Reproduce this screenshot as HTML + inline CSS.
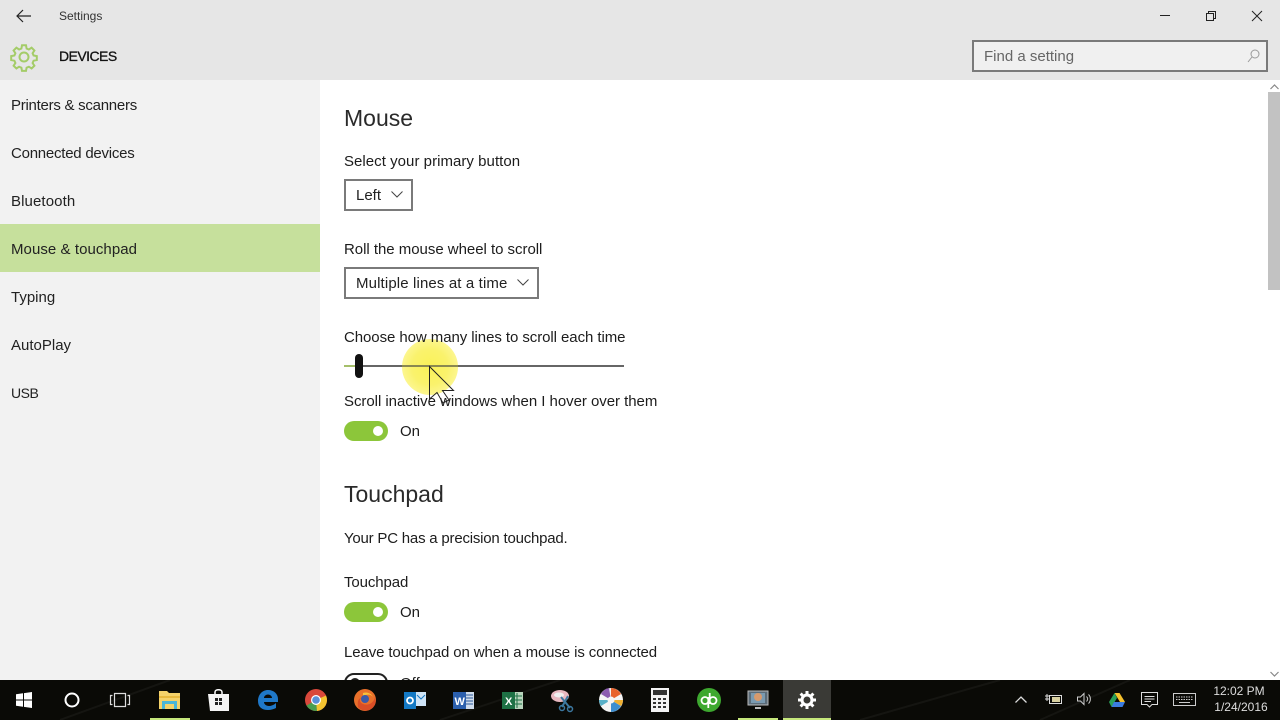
<!DOCTYPE html>
<html><head><meta charset="utf-8"><title>Settings</title>
<style>
html,body{margin:0;padding:0}
body{width:1280px;height:720px;position:relative;overflow:hidden;background:#fff;font-family:"Liberation Sans",sans-serif;color:#1a1a1a}
.a{position:absolute;white-space:nowrap}
.t{font-size:15px;line-height:20px;color:#1c1c1c}
.h{font-size:23px;line-height:30px;color:#2a2a2a}
.nav{position:absolute;left:0;width:320px;height:48px;line-height:50px;padding-top:1px;box-sizing:border-box;font-size:15px;color:#222;text-indent:11px}
.dd{position:absolute;box-sizing:border-box;height:32px;border:2px solid #7a7a7a;background:#fff;font-size:15px;line-height:30px;padding-left:10px;color:#222}
.tog{position:absolute;left:344px;width:44px;height:20px;border-radius:10px;background:#8cc63a}
.tog i{position:absolute;left:29px;top:5px;width:10px;height:10px;border-radius:5px;background:#fff}
svg{position:absolute;overflow:visible}
</style></head><body>
<div class="a" style="left:0;top:0;width:1280px;height:80px;background:#e6e6e6"></div>
<div class="a" style="left:0;top:80px;width:320px;height:600px;background:#f2f2f2"></div>

<svg style="left:16px;top:9px" width="16" height="14" fill="none" stroke="#222" stroke-width="1.2"><path d="M1 7H15M7 1L1 7L7 13"/></svg>
<div class="a" style="left:59px;top:6px;font-size:12px;line-height:20px;color:#333">Settings</div>
<svg style="left:11px;top:44px" width="26" height="26" viewBox="0 0 26 26" fill="none" stroke="#a4cc68" stroke-width="2"><path d="M11 1.5h4l.6 3.2 2.3 1 2.7-1.8 2.8 2.8-1.8 2.700 1 2.300 3.200.6v4l-3.200.6-1 2.300 1.800 2.700-2.800 2.800-2.700-1.800-2.300 1-.6 3.200h-4l-.6-3.200-2.300-1-2.700 1.800-2.800-2.800 1.800-2.700-1-2.300-3.200-.6v-4l3.200-.6 1-2.300-1.800-2.700 2.800-2.800 2.700 1.800 2.300-1z" transform="translate(0 -.2)"/><circle cx="13" cy="13" r="4.5"/></svg>
<div class="a" style="left:59px;top:46px;font-size:14px;letter-spacing:-.55px;line-height:20px;font-weight:400;color:#111;-webkit-text-stroke:.3px #111">DEVICES</div>

<svg style="left:1160px;top:15px" width="10" height="2"><path d="M0 .5H10" stroke="#222"/></svg>
<svg style="left:1206px;top:11px" width="10" height="10" fill="none" stroke="#222"><path d="M.5 2.500h7v7h-7zM2.500 2.500v-2h7v7h-2"/></svg>
<svg style="left:1252px;top:11px" width="10" height="10" fill="none" stroke="#222"><path d="M0 0L10 10M10 0L0 10"/></svg>

<div class="a" style="left:972px;top:40px;width:296px;height:32px;box-sizing:border-box;border:2px solid #7a7a7a;background:#f0f0f0"></div>
<div class="a" style="left:984px;top:47px;font-size:15px;line-height:20px;color:#666">Find a setting</div>
<svg style="left:1247px;top:49px" width="13" height="14" fill="none" stroke="#999"><circle cx="8" cy="5" r="4"/><path d="M5 8L1 13"/></svg>

<div class="nav" style="top:80px;letter-spacing:-.26px">Printers &amp; scanners</div>
<div class="nav" style="top:128px;letter-spacing:-.24px">Connected devices</div>
<div class="nav" style="top:176px;letter-spacing:.1px">Bluetooth</div>
<div class="nav" style="top:224px;background:#c6e09c;letter-spacing:.06px">Mouse &amp; touchpad</div>
<div class="nav" style="top:272px">Typing</div>
<div class="nav" style="top:320px">AutoPlay</div>
<div class="nav" style="top:367px;font-size:14px;letter-spacing:-.5px">USB</div>

<div class="a h" style="left:344px;top:103px">Mouse</div>
<div class="a t" style="left:344px;top:152px;letter-spacing:.04px">Select your primary button</div>
<div class="dd" style="left:344px;top:179px;width:69px">Left</div>
<svg style="left:391px;top:191px" width="12" height="7" fill="none" stroke="#444"><path d="M.5 .5L6 6L11.5 .5"/></svg>
<div class="a t" style="left:344px;top:240px;letter-spacing:-.03px">Roll the mouse wheel to scroll</div>
<div class="dd" style="left:344px;top:267px;width:195px;letter-spacing:.13px">Multiple lines at a time</div>
<svg style="left:517px;top:279px" width="12" height="7" fill="none" stroke="#444"><path d="M.5 .5L6 6L11.5 .5"/></svg>

<div class="a" style="left:402px;top:339px;width:56px;height:56px;border-radius:28px;background:radial-gradient(circle,#f9f158 0,#faf26c 45%,#fcf68e 70%,#fefbc8 88%,rgba(255,255,255,0) 100%)"></div>
<div class="a" style="left:344px;top:365px;width:280px;height:2px;background:#666"></div>
<div class="a" style="left:402px;top:365px;width:56px;height:2px;background:#8a8850"></div>
<div class="a" style="left:344px;top:365px;width:14px;height:2px;background:#a5bf6a"></div>
<div class="a" style="left:355px;top:354px;width:8px;height:24px;border-radius:4px;background:#111"></div>
<div class="a t" style="left:344px;top:328px;letter-spacing:-.07px">Choose how many lines to scroll each time</div>

<div class="a t" style="left:344px;top:392px;letter-spacing:-.04px">Scroll inactive windows when I hover over them</div>
<svg style="left:429px;top:366px" width="26" height="38" viewBox="0 0 26 38" fill="none" stroke="#222" stroke-width="1"><path d="M.5 .5V33L8 26.500L14 37L20 34L13.500 24.500H24.500Z"/></svg>
<div class="tog" style="top:421px"><i></i></div>
<div class="a t" style="left:400px;top:422px">On</div>

<div class="a h" style="left:344px;top:479px">Touchpad</div>
<div class="a t" style="left:344px;top:529px;letter-spacing:-.21px">Your PC has a precision touchpad.</div>
<div class="a t" style="left:344px;top:573px;letter-spacing:-.1px">Touchpad</div>
<div class="tog" style="top:602px"><i></i></div>
<div class="a t" style="left:400px;top:603px">On</div>
<div class="a t" style="left:344px;top:643px;letter-spacing:-.11px">Leave touchpad on when a mouse is connected</div>
<div class="a" style="left:344px;top:673px;width:44px;height:20px;box-sizing:border-box;border:2px solid #222;border-radius:10px"><span style="position:absolute;left:4px;top:3px;width:10px;height:10px;border-radius:5px;background:#222"></span></div>
<div class="a t" style="left:400px;top:674px">Off</div>

<div class="a" style="left:1268px;top:92px;width:12px;height:198px;background:#c2c2c2"></div>
<svg style="left:1270px;top:84px" width="9" height="6" fill="none" stroke="#888" stroke-width="1.2"><path d="M.5 5L4.500 1L8.500 5"/></svg>
<svg style="left:1270px;top:671px" width="9" height="6" fill="none" stroke="#888" stroke-width="1.2"><path d="M.5 1L4.500 5L8.500 1"/></svg>

<!-- taskbar -->
<div class="a" style="left:0;top:680px;width:1280px;height:40px;background:#0a0a06;overflow:hidden">
<svg style="left:0;top:0" width="1280" height="40" fill="none" stroke="#151511" stroke-width="2"><path d="M440 40L560 0M170 0L60 40M860 40L1000 0M1040 40L1130 0"/></svg>
<div class="a" style="left:783px;top:0;width:48px;height:40px;background:#3a3a36"></div>
<div class="a" style="left:150px;top:38px;width:40px;height:2px;background:#c6e87c"></div>
<div class="a" style="left:738px;top:38px;width:40px;height:2px;background:#c6e87c"></div>
<div class="a" style="left:783px;top:38px;width:48px;height:2px;background:#c6e87c"></div>

<svg style="left:16px;top:12px" width="16" height="16" fill="#fff"><path d="M0 2.300L7 1.300V7.500H0ZM8 1.100L16 0V7.500H8ZM0 8.500H7V14.700L0 13.700ZM8 8.500H16V16L8 14.900Z"/></svg>
<svg style="left:64px;top:12px" width="16" height="16" fill="none" stroke="#fff" stroke-width="2"><circle cx="8" cy="8" r="6.500"/></svg>
<svg style="left:110px;top:13px" width="20" height="14" fill="none" stroke="#ddd" stroke-width="1.200"><path d="M4.500 .5H15.500V13.500H4.500ZM2.500 2.500H.5V11.500H2.500M17.500 2.500H19.500V11.500H17.500"/></svg>

<svg style="left:159px;top:10px" width="22" height="20"><path d="M0 1H8L10 3H21V19H0Z" fill="#f4d26a"/><path d="M0 6H21V8H0Z" fill="#e8b93e"/><path d="M3 11H18V19H3Z" fill="#4ab6d8"/><path d="M6 14H15V19H6Z" fill="#f4d26a"/></svg>
<svg style="left:208px;top:8px" width="21" height="24"><path d="M7 7V4C7 1 14 1 14 4V7" fill="none" stroke="#fff" stroke-width="1.500"/><path d="M0 6H21V23H2Z" fill="#f4f4f4"/><path d="M7 10H10V13H7ZM11 10H14V13H11ZM7 14H10V17H7ZM11 14H14V17H11Z" fill="#222"/></svg>
<svg style="left:258px;top:9px" width="20" height="22" viewBox="0 0 20 22"><path d="M10 1C4 1 0 6 0 12C0 18 4 21 10 21C13 21 16 20 18 19V14C16 16 13 17 11 17C8 17 6 15 6 13H20V10C20 5 16 1 10 1ZM6 9C6 7 8 5.500 10 5.500C12 5.500 14 7 14 9Z" fill="#1f78c8"/></svg>
<svg style="left:305px;top:9px" width="22" height="22" viewBox="0 0 22 22"><circle cx="11" cy="11" r="11" fill="#d9483b"/><path d="M11 11L1.500 16.500A11 11 0 0 0 12 22Z" fill="#4a9e4f"/><path d="M11 11L21 6.500A11 11 0 0 1 12 22Z" fill="#f4c430"/><circle cx="11" cy="11" r="5" fill="#fff"/><circle cx="11" cy="11" r="3.800" fill="#5a90d8"/></svg>
<svg style="left:354px;top:9px" width="22" height="22" viewBox="0 0 22 22"><circle cx="11" cy="11" r="11" fill="#e8702a"/><path d="M4 18A10 10 0 0 0 21 8C20 14 14 17 9 15C6 14 5 11 7 9C5 9 3 12 4 18Z" fill="#d94e26"/><path d="M9 4A8 8 0 0 1 19 8C17 5 13 5 9 7Z" fill="#f6c13c"/><circle cx="11" cy="10" r="4" fill="#3c5aa8"/></svg>
<svg style="left:404px;top:9px" width="22" height="22"><rect x="9" y="3" width="13" height="14" fill="#cfe4f6"/><rect x="0" y="3" width="12" height="17" fill="#1479c4"/><circle cx="6" cy="11.500" r="3" fill="none" stroke="#fff" stroke-width="1.800"/><path d="M13 6L17 10L21 6" fill="none" stroke="#1479c4"/></svg>
<svg style="left:453px;top:10px" width="22" height="20"><rect x="9" y="2" width="12" height="17" fill="#cfdcec"/><path d="M11 5H20M11 8H20M11 11H20M11 14H20" stroke="#2b5797"/><rect x="0" y="2" width="13" height="17" fill="#2b5fad"/><text x="1.500" y="15" font-size="11" font-weight="bold" fill="#fff" font-family="Liberation Sans">W</text></svg>
<svg style="left:502px;top:10px" width="22" height="20"><rect x="9" y="2" width="12" height="17" fill="#b8d4bc"/><path d="M11 6H20M11 10H20M11 14H20M15 3V18" stroke="#1e7145"/><rect x="0" y="2" width="13" height="17" fill="#1e7145"/><text x="3" y="15" font-size="11" font-weight="bold" fill="#fff" font-family="Liberation Sans">X</text></svg>
<svg style="left:550px;top:8px" width="24" height="24"><ellipse cx="10" cy="8" rx="9" ry="6" fill="#e8b8c0"/><ellipse cx="9" cy="7" rx="5" ry="2.500" fill="#f0f0f0"/><path d="M11 9L20 20M18 8L12 19" stroke="#3c78a0" stroke-width="2"/><circle cx="12" cy="20" r="2.500" fill="none" stroke="#3c78a0" stroke-width="1.500"/><circle cx="20" cy="21" r="2.500" fill="none" stroke="#3c78a0" stroke-width="1.500"/></svg>
<svg style="left:599px;top:8px" width="24" height="24" viewBox="0 0 24 24"><circle cx="12" cy="12" r="12" fill="#f4f4f4"/><path d="M12 12L12 0A12 12 0 0 1 22 6Z" fill="#e8622c"/><path d="M12 12L22 18A12 12 0 0 1 12 24Z" fill="#3c8ed0"/><path d="M12 12L2 18A12 12 0 0 1 0 12Z" fill="#58b0c8"/><path d="M12 12L2 6A12 12 0 0 1 10 0Z" fill="#8c5cb0"/><path d="M12 12L24 12A12 12 0 0 1 22 18Z" fill="#f0b030"/><circle cx="12" cy="12" r="3.500" fill="#f4f4f4"/></svg>
<svg style="left:651px;top:8px" width="18" height="24"><rect width="18" height="24" fill="#f4f4f4"/><rect x="2" y="2" width="14" height="5" fill="#333"/><path d="M2 10h3v2H2zM7 10h3v2H7zM12 10h3v2h-3zM2 14h3v2H2zM7 14h3v2H7zM12 14h3v2h-3zM2 18h3v2H2zM7 18h3v2H7zM12 18h3v2h-3z" fill="#333"/></svg>
<svg style="left:697px;top:8px" width="24" height="24" fill="none"><circle cx="12" cy="12" r="12" fill="#3da82f"/><circle cx="8" cy="12.500" r="3.500" stroke="#fff" stroke-width="1.800"/><circle cx="16" cy="12.500" r="3.500" stroke="#fff" stroke-width="1.800"/><path d="M11.300 9V20M12.700 5V16" stroke="#fff" stroke-width="1.800"/></svg>
<svg style="left:747px;top:9px" width="22" height="22"><rect x="1" y="2" width="20" height="14" fill="#5c6c78" stroke="#bbb"/><rect x="4" y="4" width="14" height="10" fill="#7a9ab0"/><circle cx="11" cy="8" r="4" fill="#d89a6c"/><path d="M8 19H14" stroke="#bbb" stroke-width="2"/></svg>
<svg style="left:798px;top:11px" width="18" height="18" viewBox="0 0 18 18" fill="none" stroke="#fff"><circle cx="9" cy="9" r="5" stroke-width="3"/><path d="M9 0V4M9 14V18M0 9H4M14 9H18M2.600 2.600L5.500 5.500M12.500 12.500L15.400 15.400M15.400 2.600L12.500 5.500M5.500 12.500L2.600 15.400" stroke-width="3"/></svg>

<svg style="left:1015px;top:16px" width="12" height="7" fill="none" stroke="#ddd" stroke-width="1.300"><path d="M.5 6.500L6 1L11.500 6.500"/></svg>
<svg style="left:1045px;top:13px" width="17" height="13"><rect x="4.500" y="2.500" width="12" height="8" fill="none" stroke="#ddd"/><rect x="7" y="4" width="8" height="5" fill="#d8d0a0"/><path d="M0 3H4M0 6H4M2 1V8" stroke="#ddd"/></svg>
<svg style="left:1077px;top:12px" width="15" height="15" fill="none" stroke="#ccc"><path d="M.5 5H3.500L7 1.500V12.500L3.500 9H.5ZM9.500 4.500C11 6 11 8 9.500 9.500M11.500 2.500C14 5 14 9 11.500 11.500"/></svg>
<svg style="left:1109px;top:13px" width="16" height="14"><path d="M5.500 0H10.500L16 9H11Z" fill="#f6c12c"/><path d="M5.500 0L0 9L2.500 14L8 5Z" fill="#2aa05a"/><path d="M2.500 14H13.500L16 9H5Z" fill="#3c7ce0"/></svg>
<svg style="left:1141px;top:12px" width="17" height="17" fill="none" stroke="#ddd"><path d="M.5 .5H16.500V12.500H11L8.500 15L6 12.500H.5ZM3.500 4.500H13.500M3.500 7H13.500M3.500 9.500H10"/></svg>
<svg style="left:1173px;top:13px" width="23" height="13" fill="none" stroke="#ccc"><rect x=".5" y=".5" width="22" height="12"/><path d="M3 4H20M3 6.500H20" stroke-dasharray="1.500 1"/><path d="M6 9.500H17"/></svg>

<div class="a" style="left:1204px;top:3px;width:70px;text-align:center;font-size:12px;line-height:16px;color:#ddd">12:02 PM</div>
<div class="a" style="left:1204px;top:19px;width:74px;text-align:center;font-size:12px;line-height:16px;color:#ddd">1/24/2016</div>
</div>
</body></html>
